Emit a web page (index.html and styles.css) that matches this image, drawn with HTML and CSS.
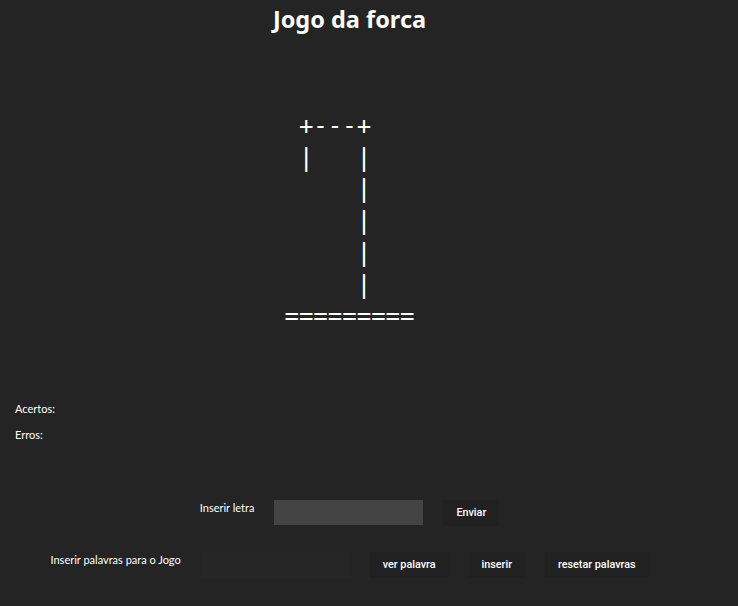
FILE: index.html
```html
<!DOCTYPE html>
<html lang="pt">
<head>
<meta charset="utf-8">
<title>Jogo da forca</title>
<link rel="stylesheet" href="styles.css">
</head>
<body>
<div class="app">
  <h1 class="title">Jogo da forca</h1>
  <pre class="gallows"> +---+
 |   |
     |
     |
     |
     |
=========</pre>
  <div class="stats">
    <p class="stat">Acertos:</p>
    <p class="stat">Erros:</p>
  </div>
  <div class="row row-letter">
    <span class="label">Inserir letra</span>
    <input class="field field-letter" type="text">
    <button class="btn">Enviar</button>
  </div>
  <div class="row row-words">
    <span class="label">Inserir palavras para o Jogo</span>
    <input class="field field-words" type="text">
    <button class="btn">ver palavra</button>
    <button class="btn">inserir</button>
    <button class="btn">resetar palavras</button>
  </div>
</div>
</body>
</html>
```
FILE: styles.css
```css
html, body {
  margin: 0;
  background: #242424;
  color: #ffffff;
  font-family: Lato, "Noto Sans", sans-serif;
}
.app {
  width: 699px;
}
.title {
  margin: 0;
  padding-top: 4px;
  font-family: "Noto Sans", sans-serif;
  font-size: 23.5px;
  font-weight: 700;
  line-height: 30px;
  text-align: center;
}
.gallows {
  width: fit-content;
  margin: 77px auto 0;
  font-family: "DejaVu Sans Mono", monospace;
  font-size: 24px;
  line-height: 31.7px;
  color: #ffffff;
}
.stats {
  padding-left: 15px;
  margin-top: 63px;
}
.stat {
  margin: 0;
  font-size: 11px;
  line-height: 26px;
}
.row {
  display: flex;
  justify-content: center;
  align-items: flex-start;
  gap: 20px;
}
.row-letter {
  margin-top: 52px;
}
.row-words {
  margin-top: 26px;
}
.label {
  font-size: 11px;
  line-height: 16px;
}
.field {
  width: 149px;
  height: 25px;
  box-sizing: border-box;
  border: none;
  padding: 0 6px;
  color: #fff;
  font: inherit;
}
.field-letter {
  background: #444444;
}
.field-words {
  background: #262626;
}
.btn {
  background: #212121;
  color: #ffffff;
  border: none;
  border-radius: 2px;
  padding: 0 13px;
  height: 26px;
  font-family: Roboto, sans-serif;
  font-size: 10.8px;
  font-weight: 500;
}
```
